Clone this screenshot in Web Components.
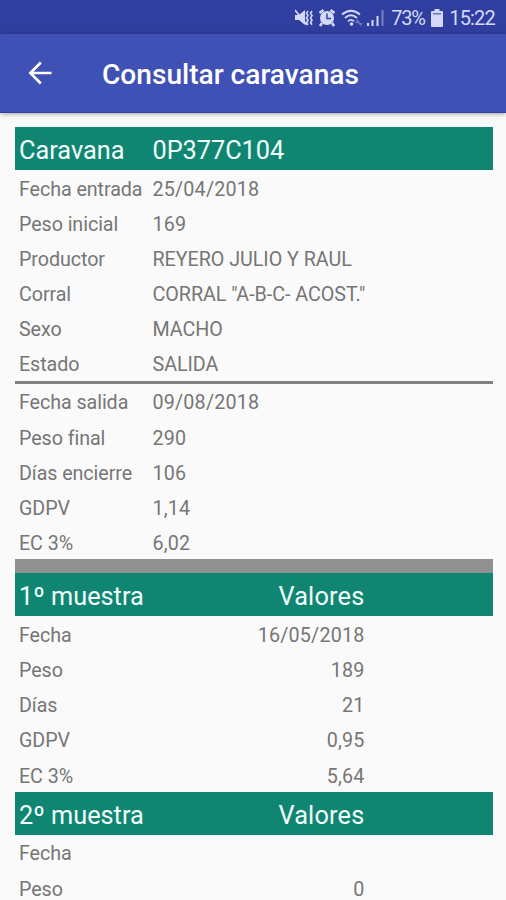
<!DOCTYPE html>
<html lang="es">
<head>
<meta charset="UTF-8">
<title>Consultar caravanas</title>
<style>
    body {
        margin: 0;
        height: 900px;
        overflow: hidden;
        background: #fafafa;
        font-family: Roboto, "Liberation Sans", sans-serif;
    }
</style>
</head>
<body>
<app-screen>
    <status-bar slot="status" battery="73%" time="15:22"></status-bar>
    <app-toolbar slot="toolbar">Consultar caravanas</app-toolbar>

    <data-header label="Caravana" text>0P377C104</data-header>
    <data-row label="Fecha entrada">25/04/2018</data-row>
    <data-row label="Peso inicial">169</data-row>
    <data-row label="Productor" text>REYERO JULIO Y RAUL</data-row>
    <data-row label="Corral" text>CORRAL "A-B-C- ACOST."</data-row>
    <data-row label="Sexo" text>MACHO</data-row>
    <data-row label="Estado" text>SALIDA</data-row>
    <data-divider></data-divider>
    <data-row label="Fecha salida">09/08/2018</data-row>
    <data-row label="Peso final">290</data-row>
    <data-row label="Días encierre">106</data-row>
    <data-row label="GDPV">1,14</data-row>
    <data-row label="EC 3%">6,02</data-row>
    <data-divider thick></data-divider>
    <data-header label="1º muestra" numeric>Valores</data-header>
    <data-row label="Fecha" numeric>16/05/2018</data-row>
    <data-row label="Peso" numeric>189</data-row>
    <data-row label="Días" numeric>21</data-row>
    <data-row label="GDPV" numeric>0,95</data-row>
    <data-row label="EC 3%" numeric>5,64</data-row>
    <data-header label="2º muestra" numeric>Valores</data-header>
    <data-row label="Fecha" numeric></data-row>
    <data-row label="Peso" numeric>0</data-row>
</app-screen>

<script>
class AppScreen extends HTMLElement {
    constructor() {
        super();
        this.attachShadow({ mode: 'open' });
        this.shadowRoot.innerHTML = `
            <style>
                :host {
                    display: flex;
                    flex-direction: column;
                    height: 900px;
                    overflow: hidden;
                }
                main {
                    flex: 1;
                    min-height: 0;
                    overflow: hidden;
                    padding: 14.5px 13.5px 0 14.5px;
                }
            </style>
            <slot name="status"></slot>
            <slot name="toolbar"></slot>
            <main><slot></slot></main>
        `;
    }
}

class StatusBar extends HTMLElement {
    constructor() {
        super();
        this.attachShadow({ mode: 'open' });
        this.shadowRoot.innerHTML = `
            <style>
                :host {
                    display: flex;
                    align-items: center;
                    justify-content: flex-end;
                    flex: none;
                    box-sizing: border-box;
                    height: 34px;
                    padding: 2px 11px 0 0;
                    background: #303e9f;
                    color: #d3d9f8;
                    font-size: 20px;
                    line-height: 32px;
                }
                svg {
                    display: block;
                    fill: currentColor;
                }
                .stroke {
                    fill: none;
                    stroke: currentColor;
                }
                #battery { margin: 0 6.5px 0 7px; letter-spacing: -1.2px; }
                #time { margin-left: 6px; letter-spacing: -0.8px; }
            </style>
            <svg width="89" height="20" viewBox="0 0 89 20">
                <!-- sound off, vibrating -->
                <path d="M0 7h4l6-5v15l-6-5H0z"/>
                <path class="stroke" stroke-width="1.7" d="M0 2l12 15"/>
                <path class="stroke" stroke-width="1.6" d="M13 3l-1.500 2.300 1.500 2.300-1.500 2.300 1.500 2.300-1.500 2.300 1.500 2.300M17 3l-1.500 2.300L17 7.600l-1.500 2.300 1.500 2.300-1.500 2.300 1.500 2.300"/>
                <!-- alarm clock -->
                <circle cx="32" cy="10" r="7"/>
                <path class="stroke" stroke-width="2.600" d="M24.500 5l4-3M39.500 5l-4-3M27 15l-2 3M37 15l2 3"/>
                <path fill="none" stroke="#303e9f" stroke-width="1.400" d="M32 5.500V10.500h4"/>
                <!-- wifi -->
                <path class="stroke" stroke-width="1.800" d="M47 6.500Q56-1 65 6.500M50 10Q56 4.500 62 10M53 13.300Q56 10.500 59 13.300"/>
                <circle cx="56.500" cy="16" r="1.800"/>
                <path opacity=".35" d="M60 15l2.500-4 2.500 4zM63 15h5l-2.500 3z"/>
                <!-- mobile signal -->
                <path d="M72 15h2v3h-2zM76.500 12h2v6h-2zM81.500 8h2v10h-2z"/>
                <path opacity=".45" d="M86.500 2h2v16h-2z"/>
            </svg>
            <span id="battery"></span>
            <svg width="12" height="18" viewBox="0 0 12 18">
                <path d="M3.500 0h5v2H11q1 0 1 1v14q0 1-1 1H1q-1 0-1-1V3q0-1 1-1h2.500z"/>
                <path fill="#303e9f" opacity=".65" d="M2 4h8v1.500H2z"/>
            </svg>
            <span id="time"></span>
        `;
    }

    connectedCallback() {
        this.shadowRoot.querySelector('#battery').textContent = this.getAttribute('battery');
        this.shadowRoot.querySelector('#time').textContent = this.getAttribute('time');
    }
}

class AppToolbar extends HTMLElement {
    constructor() {
        super();
        this.attachShadow({ mode: 'open' });
        this.shadowRoot.innerHTML = `
            <style>
                :host {
                    display: flex;
                    align-items: center;
                    flex: none;
                    box-sizing: border-box;
                    height: 78.5px;
                    padding-left: 28px;
                    background: #3f51b5;
                    border-bottom: 1px solid #3040a0;
                    box-shadow: 0 1px 5px rgba(0, 0, 0, 0.35);
                    color: #fff;
                }
                svg { display: block; margin: 1px 50px 0 0; }
                h1 {
                    margin: 5px 0 0;
                    font-size: 28.1px;
                    font-weight: 500;
                    line-height: 34px;
                    white-space: nowrap;
                }
            </style>
            <svg width="24" height="24" viewBox="0 0 24 24" fill="none" stroke="currentColor" stroke-width="2.600">
                <path d="M23.500 12H3M12.800 1.500L2.300 12l10.500 10.500"/>
            </svg>
            <h1><slot></slot></h1>
        `;
    }
}

class DataRow extends HTMLElement {
    constructor() {
        super();
        this.attachShadow({ mode: 'open' });
        this.shadowRoot.innerHTML = `
            <style>
                :host {
                    display: grid;
                    grid-template-columns: 133.5px 1fr;
                    align-items: center;
                    box-sizing: border-box;
                    height: 35.18px;
                    padding: 4.5px 0 0 4.5px;
                    color: #767676;
                    font-size: 19.7px;
                    line-height: 24px;
                    white-space: nowrap;
                }
                .label { letter-spacing: -0.07px; }
                .value { letter-spacing: 0.2px; }
                :host([text]) .value { letter-spacing: -0.03px; }
                :host([numeric]) .value {
                    width: 212px;
                    text-align: right;
                }
                ${this.extraStyles()}
            </style>
            <span class="label"></span>
            <span class="value"><slot></slot></span>
        `;
    }

    extraStyles() {
        return '';
    }

    connectedCallback() {
        this.shadowRoot.querySelector('.label').textContent = this.getAttribute('label');
    }
}

// Same columns as a row, on the green band
class DataHeader extends DataRow {
    extraStyles() {
        return `
            :host {
                height: 42.7px;
                background: #108672;
                color: #f2fffc;
                font-size: 25.3px;
                line-height: 32px;
            }
            .label { letter-spacing: 0; }
        `;
    }
}

class DataDivider extends HTMLElement {
    constructor() {
        super();
        this.attachShadow({ mode: 'open' });
        this.shadowRoot.innerHTML = `
            <style>
                :host {
                    display: block;
                    height: 2.8px;
                    background: #808080;
                }
                :host([thick]) {
                    height: 14px;
                    background: #909090;
                }
            </style>
        `;
    }
}

customElements.define('app-screen', AppScreen);
customElements.define('status-bar', StatusBar);
customElements.define('app-toolbar', AppToolbar);
customElements.define('data-row', DataRow);
customElements.define('data-header', DataHeader);
customElements.define('data-divider', DataDivider);
</script>
</body>
</html>
